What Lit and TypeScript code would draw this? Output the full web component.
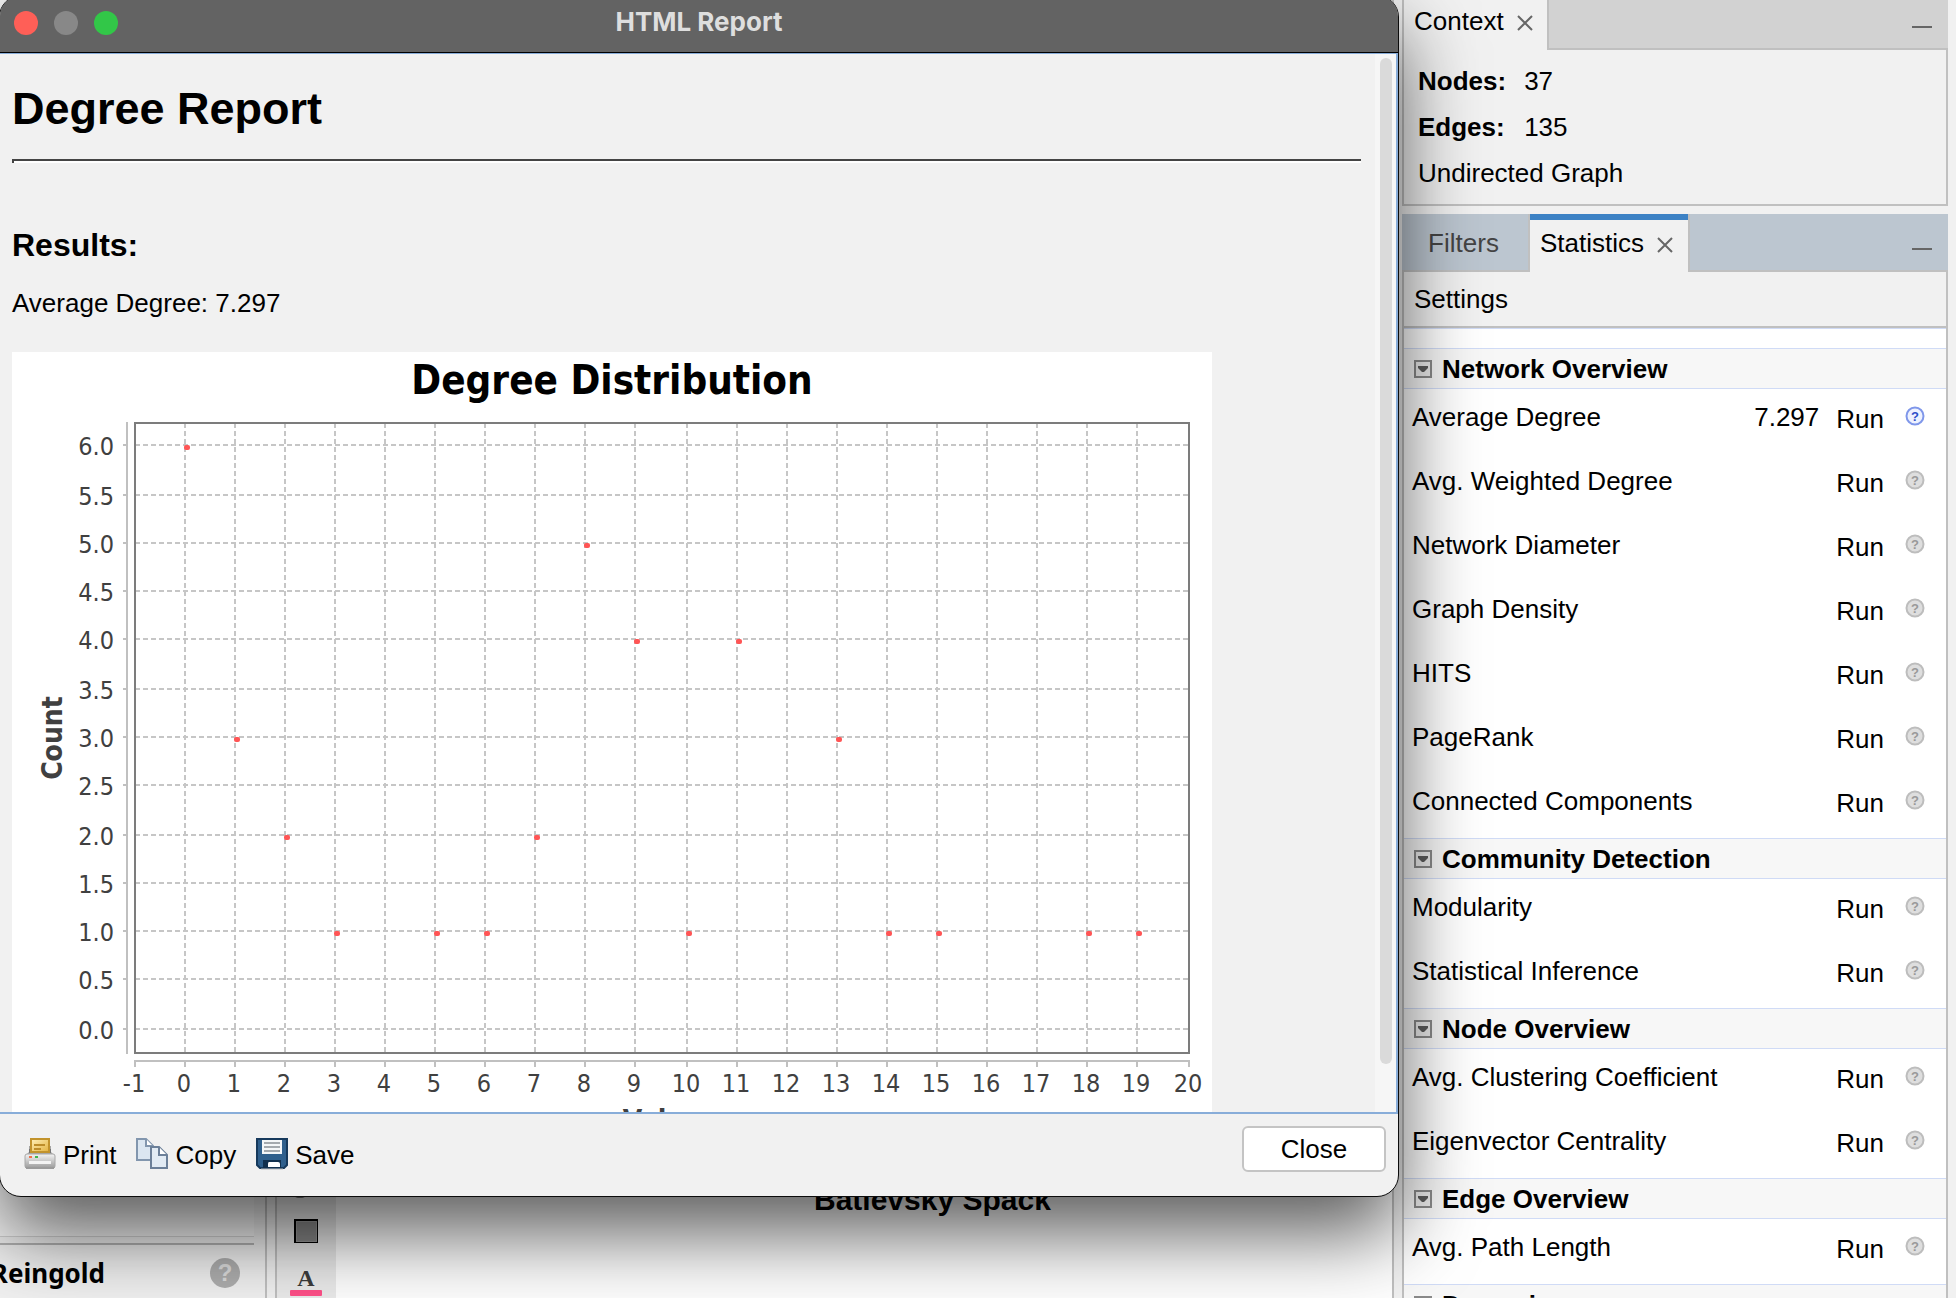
import { LitElement, html, svg, css, nothing } from "lit";
import { customElement, property } from "lit/decorators.js";

const UI_FONT = css`"Liberation Sans", Arial, Helvetica, sans-serif`;

interface Metric {
  name: string;
  value?: string;
}

interface Section {
  title: string;
  metrics: Metric[];
}

const SECTIONS: Section[] = [
  {
    title: "Network Overview",
    metrics: [
      { name: "Average Degree", value: "7.297" },
      { name: "Avg. Weighted Degree" },
      { name: "Network Diameter" },
      { name: "Graph Density" },
      { name: "HITS" },
      { name: "PageRank" },
      { name: "Connected Components" },
    ],
  },
  {
    title: "Community Detection",
    metrics: [{ name: "Modularity" }, { name: "Statistical Inference" }],
  },
  {
    title: "Node Overview",
    metrics: [{ name: "Avg. Clustering Coefficient" }, { name: "Eigenvector Centrality" }],
  },
  { title: "Edge Overview", metrics: [{ name: "Avg. Path Length" }] },
  { title: "Dynamic", metrics: [] },
];

/* ---------- Degree distribution chart ---------- */

const PLOT = { left: 123, right: 1177, top: 71, bottom: 701 };
const GRID_Y = [677, 627, 579, 531, 483, 433, 385, 337, 287, 239, 191, 143, 93];
const POINTS: [number, number][] = [
  [0, 6], [1, 3], [2, 2], [3, 1], [5, 1], [6, 1], [7, 2], [8, 5],
  [9, 4], [10, 1], [11, 4], [13, 3], [14, 1], [15, 1], [18, 1], [19, 1],
];
const TICKS_X = Array.from({ length: 22 }, (_, i) => i - 1);
const xAt = (n: number) => PLOT.left + 2 * Math.floor((n + 1) * 25.0953);

@customElement("degree-chart")
export class DegreeChart extends LitElement {
  static styles = css`
    :host { display: block; background: #fff; }
    svg { display: block; }
    text { font-family: "DejaVu Sans Condensed", "Noto Sans", sans-serif; fill: #404040; }
    .title { font-size: 40px; font-weight: 700; fill: #000; }
    .axis-title { font-size: 28px; font-weight: 700; }
    .tick { font-size: 25px; }
    .grid { stroke: #c6c6c6; stroke-width: 2; stroke-dasharray: 5 3; }
    .axis { stroke: #c0c0c0; stroke-width: 2; }
    .frame { fill: none; stroke: #7c7c7c; stroke-width: 2; }
    .dot { fill: #ff5555; }
  `;

  render() {
    return html`
      <svg width="1200" height="900" viewBox="0 0 1200 900" role="img" aria-label="Degree Distribution">
        <text class="title" x="600" y="42" text-anchor="middle">Degree Distribution</text>
        ${GRID_Y.map((y, i) => svg`
          <line class="grid" x1=${PLOT.left} x2=${PLOT.right} y1=${y} y2=${y}></line>
          <line class="axis" x1="111" x2="115" y1=${y} y2=${y}></line>
          <text class="tick" x="102" y=${y + 10} text-anchor="end">${(i / 2).toFixed(1)}</text>`)}
        ${TICKS_X.map((n) => svg`
          <line class="grid" x1=${xAt(n)} x2=${xAt(n)} y1=${PLOT.top} y2=${PLOT.bottom}></line>
          <line class="axis" x1=${xAt(n)} x2=${xAt(n)} y1="709" y2="715"></line>
          <text class="tick" x=${xAt(n) - 1} y="740" text-anchor="middle">${n}</text>`)}
        <line class="axis" x1="115" x2="115" y1="70" y2="702"></line>
        <line class="axis" x1="122" x2="1178" y1="709" y2="709"></line>
        <rect class="frame" x=${PLOT.left} y=${PLOT.top}
          width=${PLOT.right - PLOT.left} height=${PLOT.bottom - PLOT.top}></rect>
        ${POINTS.map(([x, y]) => svg`
          <rect class="dot" x=${xAt(x) - 1} y=${GRID_Y[y * 2]} width="6" height="5" rx="2"></rect>`)}
        <text class="axis-title" transform="translate(50 386) rotate(-90)" text-anchor="middle">Count</text>
        <text class="axis-title" x="650" y="778" text-anchor="middle">Value</text>
      </svg>`;
  }
}

/* ---------- Toolbar icons ---------- */

const printIcon = html`
  <svg width="32" height="32" viewBox="0 0 32 32" aria-hidden="true">
    <defs>
      <linearGradient id="body" x1="0" y1="0" x2="0" y2="1">
        <stop offset="0" stop-color="#f4f4f4"></stop><stop offset="1" stop-color="#9c9c9c"></stop>
      </linearGradient>
      <linearGradient id="paper" x1="0" y1="0" x2="1" y2="1">
        <stop offset="0" stop-color="#fff0b8"></stop><stop offset="1" stop-color="#e3b23f"></stop>
      </linearGradient>
    </defs>
    <path d="M5 8h22v6l4 4v12H1V18l4-4z" fill="#a6a6a6"></path>
    <rect x="1" y="16" width="30" height="14" rx="2" fill="url(#body)" stroke="#a8a8a8"></rect>
    <rect x="5" y="11" width="22" height="4" fill="#757575"></rect>
    <path d="M7 1h18v13H7z" fill="url(#paper)" stroke="#c2932c" stroke-width="2"></path>
    <path d="M10 7h11M10 11h7" stroke="#bd8d2a" stroke-width="2"></path>
    <path d="M5 19h3" stroke="#f0714a" stroke-width="2"></path>
    <path d="M11 19h3" stroke="#3fb64c" stroke-width="2"></path>
    <path d="M5 23h22v3H5z" fill="#f3f3f3"></path>
    <path d="M2 30h28" stroke="#9b9b9b" stroke-width="2"></path>
  </svg>`;

const copyIcon = html`
  <svg width="32" height="32" viewBox="0 0 32 32" aria-hidden="true">
    <path d="M1 1h9l7 7v14H1z" fill="#dbe6f1" stroke="#8296ae" stroke-width="2"></path>
    <path d="M10 1v7h7" fill="#fff" stroke="#8296ae" stroke-width="2"></path>
    <path d="M15 9h8l8 8v13H15z" fill="#e2ebf4" stroke="#6c8099" stroke-width="2"></path>
    <path d="M23 9v8h8" fill="#fff" stroke="#6c8099" stroke-width="2"></path>
  </svg>`;

const saveIcon = html`
  <svg width="32" height="32" viewBox="0 0 32 32" aria-hidden="true">
    <path d="M1 1h30v26l-3 3H4l-3-3z" fill="#2f5f8c" stroke="#16395c" stroke-width="2"></path>
    <rect x="6" y="2" width="20" height="14" fill="#f4f6f8"></rect>
    <path d="M8 5h16M8 9h16M8 13h16" stroke="#a4a9ae" stroke-width="2"></path>
    <path d="M7 22h18v8H7z" fill="#12304e"></path>
    <path d="M13 24h9q2 0 2 2v3H12v-3q0-2 1-2z" fill="#fff"></path>
    <path d="M5 31h22" stroke="#bcbcbc" stroke-width="1"></path>
  </svg>`;

@customElement("report-dialog")
export class ReportDialog extends LitElement {
  static styles = css`
    :host {
      display: flex;
      flex-direction: column;
      box-sizing: border-box;
      border: 1px solid #0c0c0c;
      border-radius: 22px;
      background: #f1f1f1;
      box-shadow: 0 36px 80px rgba(0, 0, 0, 0.65);
      font: 26px/30px ${UI_FONT};
      color: #000;
    }
    * { box-sizing: border-box; }
    .titlebar {
      flex: none;
      display: grid;
      grid-template-columns: 1fr auto 1fr;
      align-items: center;
      height: 57px;
      padding: 0 14px 2px;
      border-bottom: 1px solid #000;
      border-radius: 20px 20px 0 0;
      background: #636363;
    }
    .lights { display: flex; gap: 16px; }
    .light { width: 24px; height: 24px; padding: 0; border: 0; border-radius: 50%; }
    .close { background: #ff5f57; }
    .minimize { background: #888; }
    .zoom { background: #32c748; }
    .title { padding-bottom: 2px; font: 700 26px/30px Inter, sans-serif; color: #dedede; }
    .body {
      flex: 1;
      min-height: 0;
      display: flex;
      border: solid #88add9;
      border-width: 1px 2px 2px 0;
    }
    .document { flex: 1; min-width: 0; overflow: hidden; padding: 30px 14px 0 12px; }
    h1 { margin: 0; font-size: 45px; line-height: 50px; }
    hr {
      height: 4px;
      margin: 25px 0 64px;
      border: solid #444;
      border-width: 2px 0 0 2px;
      background: #fff;
    }
    h2 { margin: 0 0 25px; font-size: 32px; line-height: 36px; }
    p { margin: 0 0 34px; }
    degree-chart { width: 1200px; }
    .track { flex: none; width: 21px; padding: 4px 4px 48px 5px; background: #f6f6f6; }
    .thumb { height: 100%; border-radius: 6px; background: #dadada; }
    .footer {
      flex: none;
      display: flex;
      justify-content: space-between;
      align-items: flex-start;
      height: 82px;
      padding: 12px 12px 0 24px;
    }
    .tools { display: flex; gap: 20px; padding-top: 12px; }
    button { font: inherit; color: inherit; }
    .tool {
      display: flex;
      align-items: center;
      gap: 7px;
      height: 32px;
      padding: 0;
      border: 0;
      background: none;
    }
    .tool span { padding-top: 2px; }
    .dismiss {
      width: 144px;
      height: 46px;
      border: 2px solid #c4c4c4;
      border-radius: 6px;
      background: #fff;
    }
  `;

  render() {
    return html`
      <header class="titlebar">
        <div class="lights">
          <button class="light close" aria-label="Close window"></button>
          <button class="light minimize" aria-label="Minimize window"></button>
          <button class="light zoom" aria-label="Zoom window"></button>
        </div>
        <div class="title">HTML Report</div>
      </header>
      <div class="body">
        <div class="document">
          <h1>Degree Report</h1>
          <hr />
          <h2>Results:</h2>
          <p>Average Degree: 7.297</p>
          <degree-chart></degree-chart>
        </div>
        <div class="track"><div class="thumb"></div></div>
      </div>
      <footer class="footer">
        <div class="tools">
          <button class="tool">${printIcon}<span>Print</span></button>
          <button class="tool">${copyIcon}<span>Copy</span></button>
          <button class="tool">${saveIcon}<span>Save</span></button>
        </div>
        <button class="dismiss">Close</button>
      </footer>`;
  }
}

/* ---------- Dock: context and statistics panels ---------- */

const closeGlyph = html`
  <svg width="16" height="16" viewBox="0 0 16 16" aria-hidden="true">
    <path d="M1 1l14 14M15 1L1 15" stroke="#666" stroke-width="2" fill="none"></path>
  </svg>`;

@customElement("stat-row")
export class StatRow extends LitElement {
  @property() name = "";
  @property() value?: string;

  static styles = css`
    :host {
      display: flex;
      align-items: flex-start;
      box-sizing: border-box;
      height: 64px;
      padding: 13px 21px 0 8px;
    }
    .name { flex: 1; }
    .value { margin-right: 17px; }
    button { padding: 0; border: 0; background: none; font: inherit; color: inherit; }
    .run { margin: 2px 21px 0 0; }
    .help { display: block; height: 20px; margin-top: 4px; }
    svg { display: block; }
    .mark { font: 700 13px/16px "Liberation Sans", sans-serif; }
  `;

  render() {
    const done = this.value !== undefined;
    const ring = done ? "#7f97ea" : "#bdbdbd";
    const fill = done ? "#eef2ff" : "#dedede";
    const mark = done ? "#2e4fc9" : "#999999";
    return html`
      <span class="name">${this.name}</span>
      ${done ? html`<span class="value">${this.value}</span>` : nothing}
      <button class="run">Run</button>
      <button class="help" aria-label="Help for ${this.name}">
        <svg width="20" height="20" viewBox="0 0 20 20">
          <circle cx="10" cy="10" r="8.5" fill=${fill} stroke=${ring} stroke-width="2"></circle>
          <text class="mark" x="10" y="15" text-anchor="middle" fill=${mark}>?</text>
        </svg>
      </button>`;
  }
}

@customElement("side-dock")
export class SideDock extends LitElement {
  static styles = css`
    :host {
      display: flex;
      flex-direction: column;
      gap: 8px;
      min-height: 0;
      font: 26px/30px ${UI_FONT};
      color: #000;
    }
    * { box-sizing: border-box; }
    button { padding: 0; border: 0; background: none; font: inherit; color: inherit; }
    svg { display: block; }
    .tabs { flex: none; display: flex; }
    .tab { display: flex; align-items: center; gap: 13px; }
    .filler {
      flex: 1;
      display: flex;
      justify-content: flex-end;
      align-items: flex-start;
      padding-right: 16px;
      border-bottom: 2px solid #c0c0c0;
    }
    .minimize { width: 20px; height: 2px; background: #666; }

    .context-tabs { height: 50px; }
    .context-tabs .tab {
      padding: 0 14px 8px 10px;
      border: solid #c0c0c0;
      border-width: 0 2px;
      background: #f1f1f1;
    }
    .tab button { padding-top: 3px; }
    .context-tabs .filler { background: #d2d2d2; padding-top: 26px; }
    .context {
      display: grid;
      grid-template-columns: auto 1fr;
      column-gap: 18px;
      row-gap: 16px;
      align-content: start;
      margin: 0;
      height: 156px;
      padding: 16px 14px;
      border: solid #c0c0c0;
      border-width: 0 2px 2px;
      background: #f1f1f1;
    }
    dt { font-weight: 700; }
    dd { margin: 0; }
    .kind { grid-column: 1 / -1; }

    .panel { flex: 1; min-height: 0; display: flex; flex-direction: column; }
    .stat-tabs { height: 58px; background: #bcc6d0; }
    .filters { width: 126px; padding: 2px 3px 0 0; border-bottom: 2px solid #c0c0c0; color: #444; }
    .stat-tabs .tab {
      padding: 0 15px 0 10px;
      border: 0 solid #c0c0c0;
      border-width: 0 2px 0 2px;
      background: linear-gradient(#3d82c5 6px, #f1f1f1 6px);
    }
    .stat-tabs .filler { padding-top: 34px; }
    .settings {
      flex: none;
      padding: 12px 10px;
      border: solid #c0c0c0;
      border-width: 0 2px 2px;
      text-align: left;
      background: #f1f1f1;
    }
    .list {
      flex: 1;
      min-height: 0;
      overflow: hidden;
      padding-top: 20px;
      border: solid #c0c0c0;
      border-width: 0 2px;
      background: #fff;
      box-shadow: inset 0 1px #d0dbf6;
    }
    .section { padding-bottom: 1px; }
    .heading {
      display: flex;
      align-items: center;
      gap: 10px;
      width: 100%;
      height: 41px;
      padding: 0 10px;
      border: solid #d0dbf6;
      border-width: 1px 0;
      background: #f7f7f7;
      font-weight: 700;
    }
  `;

  render() {
    return html`
      <section>
        <div class="tabs context-tabs">
          <div class="tab"><span>Context</span><button aria-label="Close Context">${closeGlyph}</button></div>
          <div class="filler"><button class="minimize" aria-label="Minimize Context"></button></div>
        </div>
        <dl class="context">
          <dt>Nodes:</dt><dd>37</dd>
          <dt>Edges:</dt><dd>135</dd>
          <dd class="kind">Undirected Graph</dd>
        </dl>
      </section>
      <section class="panel">
        <div class="tabs stat-tabs">
          <button class="filters">Filters</button>
          <div class="tab"><span>Statistics</span><button aria-label="Close Statistics">${closeGlyph}</button></div>
          <div class="filler"><button class="minimize" aria-label="Minimize Statistics"></button></div>
        </div>
        <button class="settings">Settings</button>
        <div class="list">
          ${SECTIONS.map((s) => html`
            <div class="section">
              <button class="heading" aria-expanded="true">
                <svg width="18" height="18" viewBox="0 0 18 18" aria-hidden="true">
                  <rect x="1" y="1" width="16" height="16" fill="#ececec" stroke="#8a8a8a" stroke-width="2"></rect>
                  <path d="M4 6h10v2l-4 4H8L4 8z" fill="#5c5c5c"></path>
                </svg>
                <span>${s.title}</span>
              </button>
              ${s.metrics.map((m) => html`<stat-row .name=${m.name} .value=${m.value}></stat-row>`)}
            </div>`)}
        </div>
      </section>`;
  }
}

/* ---------- Application shell ---------- */

@customElement("app-root")
export class AppRoot extends LitElement {
  static styles = css`
    :host {
      position: relative;
      display: grid;
      grid-template-columns: 267px 1fr 546px;
      gap: 8px;
      height: 100vh;
      padding-right: 8px;
      box-sizing: border-box;
      overflow: hidden;
      background: #f1f1f1;
      font: 26px/30px ${UI_FONT};
      color: #000;
    }
    * { box-sizing: border-box; }
    svg { display: block; }
    button { padding: 0; border: 0; background: none; }
    .layout {
      display: flex;
      flex-direction: column;
      min-width: 0;
      padding-right: 11px;
      border-right: 2px solid #c0c0c0;
    }
    .properties { flex: 1; margin-bottom: 6px; border-bottom: 1px solid #d4d4d4; background: #f8f8f8; }
    .algorithm {
      display: flex;
      justify-content: flex-end;
      align-items: center;
      gap: 105px;
      height: 55px;
      padding: 3px 14px 0 0;
      border-top: 2px solid #b4b4b4;
      overflow: hidden;
      white-space: nowrap;
      font-family: "Noto Sans", sans-serif;
      font-weight: 700;
    }
    .graph {
      display: flex;
      min-width: 0;
      border: solid #c0c0c0;
      border-width: 0 2px;
    }
    .tools {
      flex: none;
      display: flex;
      flex-direction: column;
      justify-content: flex-end;
      align-items: center;
      gap: 19px;
      width: 59px;
      padding-right: 2px;
      background: #ebebeb;
    }
    .tools svg { overflow: visible; }
    .glyph { font: 700 24px/24px "Liberation Serif", serif; }
    .question { font: 700 24px/24px "Liberation Sans", sans-serif; }
    .canvas { flex: 1; position: relative; background: #fff; }
    .node { position: absolute; left: 478px; bottom: 81px; font-size: 30px; line-height: 34px; font-weight: 700; }
    report-dialog { position: absolute; top: -5px; right: 557px; bottom: 101px; left: -1px; }
  `;

  render() {
    return html`
      <section class="layout">
        <div class="properties"></div>
        <div class="algorithm">
          <span>Fruchterman Reingold</span>
          <button aria-label="Layout help">
            <svg width="30" height="30" viewBox="0 0 30 30">
              <circle cx="15" cy="15" r="15" fill="#aeaeae"></circle>
              <text class="question" x="15" y="23" text-anchor="middle" fill="#dcdcdc">?</text>
            </svg>
          </button>
        </div>
      </section>
      <section class="graph">
        <div class="tools">
          <button aria-label="Edge weight">
            <svg width="32" height="32" viewBox="0 0 32 32"><ellipse cx="10" cy="32" rx="5" ry="2" fill="#777"></ellipse></svg>
          </button>
          <button aria-label="Background colour">
            <svg width="32" height="32" viewBox="0 0 32 32">
              <rect x="4" y="4" width="24" height="24" fill="#000"></rect>
              <rect x="6" y="6" width="21" height="21" fill="#999"></rect>
              <rect x="7" y="7" width="19" height="19" fill="#888"></rect>
            </svg>
          </button>
          <button aria-label="Label colour">
            <svg width="32" height="32" viewBox="0 0 32 32">
              <text class="glyph" x="16" y="20" text-anchor="middle" fill="#3c3c3c">A</text>
              <rect x="0" y="24" width="32" height="6" rx="1" fill="#ff5088"></rect>
            </svg>
          </button>
        </div>
        <div class="canvas"><div class="node">Batievsky Spack</div></div>
      </section>
      <side-dock></side-dock>
      <report-dialog></report-dialog>`;
  }
}
